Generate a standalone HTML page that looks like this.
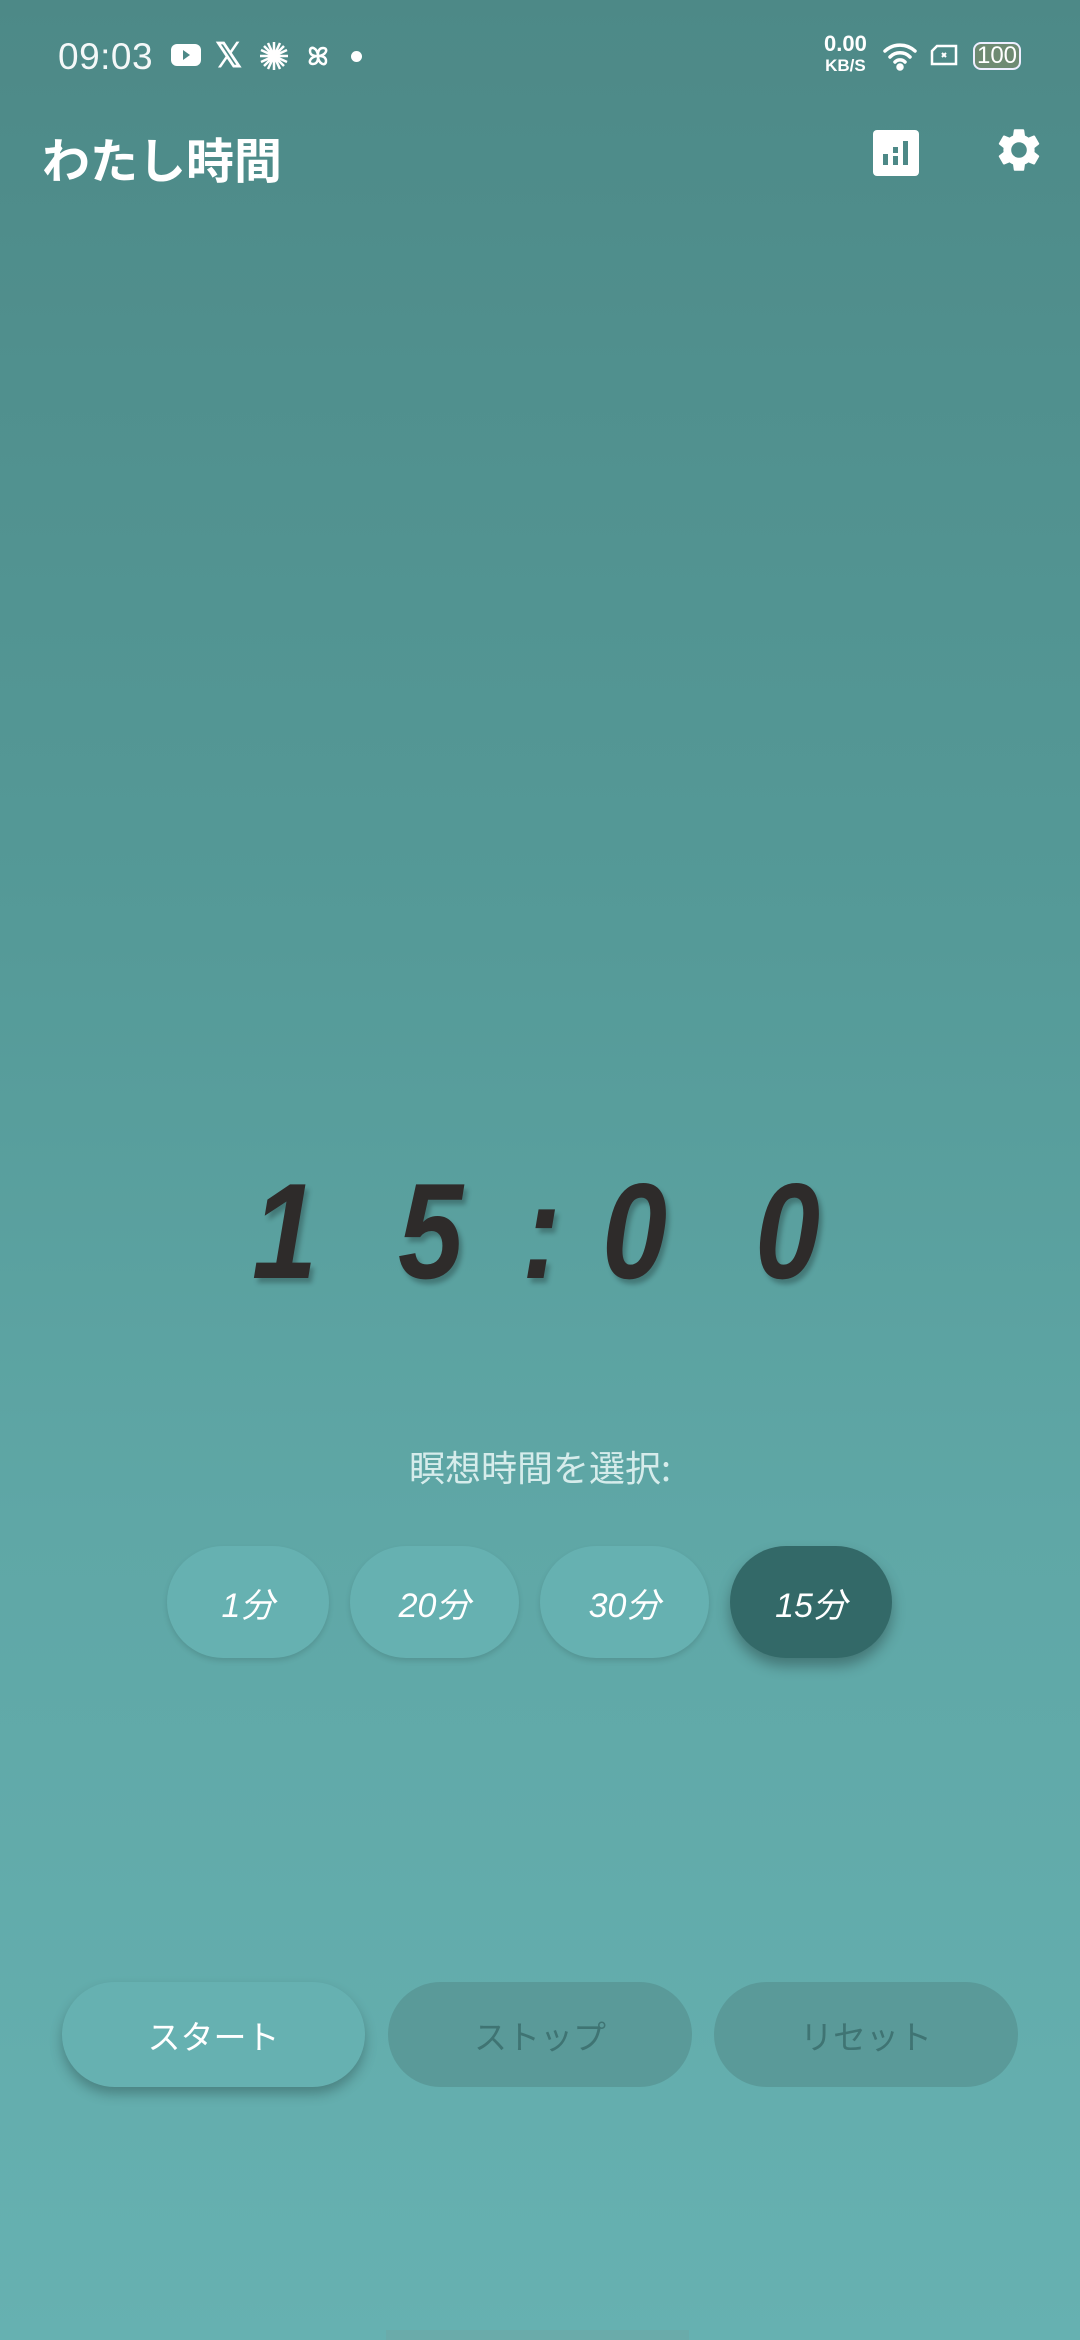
<!DOCTYPE html>
<html><head><meta charset="utf-8">
<style>
html,body{margin:0;padding:0}
body{width:1080px;height:2340px;position:relative;overflow:hidden;
background:linear-gradient(180deg,#4d8987 0%,#559a98 40%,#5fa7a6 65%,#66b1b1 100%);
font-family:"Liberation Sans","Noto Sans CJK JP",sans-serif;color:#fff}
.a{position:absolute}
.st{top:36px;left:58px;font-size:37px;letter-spacing:0.5px;color:#f4f8f8}
.title{left:42px;top:122px;font-size:48px;font-weight:bold;font-family:"Noto Sans CJK JP",sans-serif}
.d{position:absolute;top:1156px;font-family:"Liberation Sans",sans-serif;font-weight:bold;font-style:italic;font-size:136px;line-height:150px;color:#2e2b2a;text-shadow:4px 5px 5px rgba(0,0,0,.25);transform:scaleX(.86);transform-origin:left top}
.lab{left:0;width:1080px;top:1440px;text-align:center;font-size:36px;color:#d6eceb;font-family:"Noto Sans CJK JP",sans-serif}
.chip{position:absolute;top:1546px;height:112px;border-radius:56px;background:#66b1b1;display:flex;align-items:center;justify-content:center;font-size:34px;font-style:italic;box-shadow:0 3px 6px rgba(0,0,0,.12);font-family:"Liberation Sans","Noto Sans CJK JP",sans-serif}
.sel{background:#336968;box-shadow:0 8px 14px rgba(0,0,0,.3)}
.btn{position:absolute;top:1982px;height:105px;border-radius:53px;display:flex;align-items:center;justify-content:center;font-size:33px;font-family:"Noto Sans CJK JP",sans-serif}
</style></head><body>
<div class="a st">09:03</div>
<svg class="a" style="left:170px;top:43px" width="32" height="24" viewBox="0 0 32 24"><rect x="1" y="1" width="30" height="22" rx="6" fill="#fff"/><path d="M13 7l7 5-7 5z" fill="#4d8987"/></svg>
<div class="a" style="left:215px;top:36px;font-size:34px;font-weight:bold;color:#fff">𝕏</div>
<svg class="a" style="left:258px;top:40px" width="32" height="32" viewBox="0 0 32 32" stroke="#fff" stroke-width="2.5"><path d="M16 2v28M2 16h28M6 6l20 20M26 6L6 26M10 3l12 26M22 3L10 29M3 10l26 12M29 10L3 22"/></svg>
<svg class="a" style="left:304px;top:42px" width="28" height="28" viewBox="0 0 28 28" fill="none" stroke="#fff" stroke-width="2.5"><path d="M14 14C14 6 6 3 6 9s8 5 8 5zM14 14c8 0 11-8 5-8s-5 8-5 8zM14 14c0 8 8 11 8 5s-8-5-8-5zM14 14c-8 0-11 8-5 8s5-8 5-8z"/></svg>
<div class="a" style="left:351px;top:51px;width:11px;height:11px;border-radius:50%;background:#fff"></div>
<div class="a" style="left:824px;top:34px;font-size:22px;font-weight:bold;line-height:20px;text-align:center">0.00<br><span style="font-size:17px">KB/S</span></div>
<svg class="a" style="left:882px;top:40px" width="38" height="32" viewBox="0 0 38 32" fill="none" stroke="#fff" stroke-width="3.5" stroke-linecap="round"><path d="M3 11a22 22 0 0 1 30 0M8 17a14 14 0 0 1 20 0M13 22a7 7 0 0 1 10 0"/><circle cx="18" cy="27" r="2" fill="#fff"/></svg>
<svg class="a" style="left:930px;top:44px" width="28" height="22" viewBox="0 0 28 22"><path d="M7 2h19v18H2V7z" fill="none" stroke="#fff" stroke-width="2.5"/><path d="M12 9l4 4M16 9l-4 4" stroke="#fff" stroke-width="2"/></svg>
<div class="a" style="left:973px;top:42px;width:44px;height:24px;border:2.5px solid #eef;border-radius:8px;background:#6e8a72;font-size:24px;line-height:24px;text-align:center;color:#fff;box-sizing:content-box">100</div>
<div class="a title">わたし時間</div>
<svg class="a" style="left:873px;top:130px" width="46" height="46" viewBox="0 0 46 46"><rect width="46" height="46" rx="4" fill="#fff"/><rect x="10" y="24" width="5" height="11" fill="#4d8987"/><rect x="20" y="17" width="5" height="18" fill="#4d8987"/><rect x="20" y="23" width="5" height="3" fill="#fff"/><rect x="30" y="11" width="5" height="24" fill="#4d8987"/></svg>
<svg class="a" style="left:993px;top:124px" width="52" height="52" viewBox="0 0 24 24"><path fill="#fff" d="M19.14 12.94c.04-.3.06-.61.06-.94 0-.32-.02-.64-.07-.94l2.03-1.58a.49.49 0 0 0 .12-.61l-1.92-3.32a.49.49 0 0 0-.59-.22l-2.39.96c-.5-.38-1.03-.7-1.62-.94l-.36-2.54a.48.48 0 0 0-.48-.41h-3.84c-.24 0-.43.17-.47.41l-.36 2.54c-.59.24-1.13.57-1.62.94l-2.39-.96a.49.49 0 0 0-.59.22L2.74 8.87c-.12.21-.08.47.12.61l2.03 1.58c-.05.3-.09.63-.09.94s.02.64.07.94l-2.03 1.58a.49.49 0 0 0-.12.61l1.92 3.32c.12.22.37.29.59.22l2.39-.96c.5.38 1.03.7 1.62.94l.36 2.54c.05.24.24.41.48.41h3.84c.24 0 .44-.17.47-.41l.36-2.54c.59-.24 1.13-.56 1.62-.94l2.39.96c.22.08.47 0 .59-.22l1.92-3.32c.12-.22.07-.47-.12-.61l-2.01-1.58zM12 15.6A3.6 3.6 0 1 1 12 8.4a3.6 3.6 0 0 1 0 7.2z"/></svg>
<div class="d" style="left:252px">1</div>
<div class="d" style="left:398px">5</div>
<div class="d" style="left:522px">:</div>
<div class="d" style="left:602px">0</div>
<div class="d" style="left:755px">0</div>
<div class="a lab">瞑想時間を選択:</div>
<div class="chip" style="left:167px;width:162px">1分</div>
<div class="chip" style="left:350px;width:169px">20分</div>
<div class="chip" style="left:540px;width:169px">30分</div>
<div class="chip sel" style="left:730px;width:162px">15分</div>
<div class="btn" style="left:62px;width:303px;background:#66b1b1;box-shadow:0 7px 12px rgba(0,0,0,.25);color:#fff">スタート</div>
<div class="btn" style="left:388px;width:304px;background:#5a9a99;color:#3f7473">ストップ</div>
<div class="btn" style="left:714px;width:304px;background:#5a9a99;color:#3f7473">リセット</div>
<div class="a" style="left:386px;top:2330px;width:303px;height:10px;background:#6aabaa"></div>
</body></html>
